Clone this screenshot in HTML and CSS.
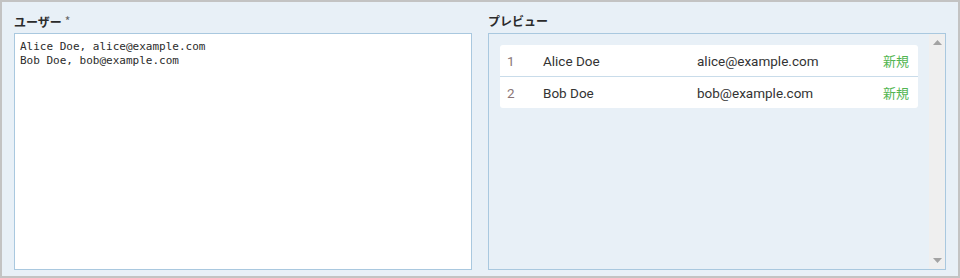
FILE: index.html
```html
<!DOCTYPE html>
<html lang="ja">
<head>
<meta charset="utf-8">
<link rel="stylesheet" href="styles.css">
</head>
<body>
<div class="frame">
  <div class="col">
    <div class="label">ユーザー<span class="req">*</span></div>
    <textarea class="input">Alice Doe, alice@example.com
Bob Doe, bob@example.com</textarea>
  </div>
  <div class="col">
    <div class="label">プレビュー</div>
    <div class="preview">
      <div class="scroll-area">
        <div class="table">
          <div class="row"><span class="num">1</span><span class="name">Alice Doe</span><span class="email">alice@example.com</span><span class="status">新規</span></div>
          <div class="row"><span class="num">2</span><span class="name">Bob Doe</span><span class="email">bob@example.com</span><span class="status">新規</span></div>
        </div>
      </div>
      <div class="scrollbar">
        <svg class="arrow" width="9" height="5" viewBox="0 0 9 5"><path d="M0 5 L4.5 0 L9 5 Z" fill="#a3a3a3"/></svg>
        <svg class="arrow" width="9" height="5" viewBox="0 0 9 5"><path d="M0 0 L4.5 5 L9 0 Z" fill="#a3a3a3"/></svg>
      </div>
    </div>
  </div>
</div>
</body>
</html>
```
FILE: styles.css
```css
* { box-sizing: border-box; }
html, body { margin: 0; padding: 0; }
body { width: 960px; height: 278px; overflow: hidden; }
.frame {
  width: 960px;
  height: 278px;
  border: 2px solid #c3c3c3;
  background: #e8f0f7;
  padding: 10px 12px 6px 12px;
  display: grid;
  grid-template-columns: 1fr 1fr;
  column-gap: 16px;
}
.col { display: flex; flex-direction: column; min-height: 0; }
.label {
  font-family: "Noto Sans CJK JP", "Noto Sans", sans-serif;
  font-size: 12px;
  font-weight: 700;
  color: #2b2b2b;
  height: 21px;
  line-height: 18px;
}
.req { color: #666; font-weight: 400; font-size: 12px; margin-left: 3px; vertical-align: 1px; }
.input {
  flex: 1;
  resize: none;
  border: 1px solid #a9c8df;
  background: #fff;
  margin: 0;
  padding: 6px 5px;
  font-family: "DejaVu Sans Mono", monospace;
  font-size: 11px;
  line-height: 14px;
  color: #2b2b2b;
  outline: none;
}
.preview {
  flex: 1;
  border: 1px solid #a9c8df;
  background: #e8f0f7;
  display: flex;
}
.scroll-area { flex: 1; padding: 11px 11px; }
.table { background: #fff; border-radius: 3px; }
.row {
  display: grid;
  grid-template-columns: 36px 154px 1fr auto;
  align-items: center;
  height: 32px;
  padding: 0 9px 0 7px;
  font-family: Roboto, "Noto Sans CJK JP", sans-serif;
  font-size: 13.5px;
  color: #333;
}
.row + .row { border-top: 1px solid #c9dcea; height: 32px; }
.row:first-child { height: 31px; }
.num { color: #8b7676; }
.status { color: #52b552; font-family: "Noto Sans CJK JP", sans-serif; font-size: 13px; font-weight: 400; }
.scrollbar {
  width: 16px;
  background: #efefef;
  display: flex;
  flex-direction: column;
  justify-content: space-between;
  align-items: center;
  padding: 6px 0 6px;
}
.arrow { display: block; }
```
